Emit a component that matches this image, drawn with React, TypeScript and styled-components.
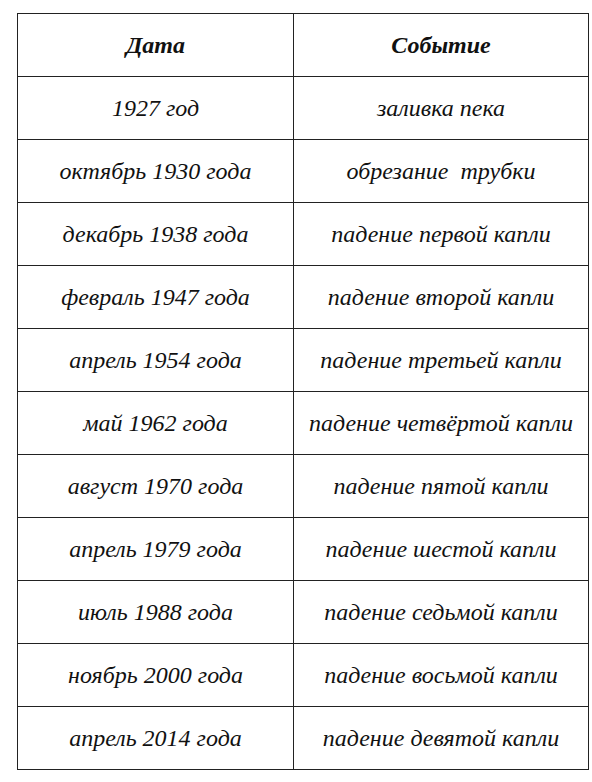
import styled, { createGlobalStyle } from 'styled-components'

const GlobalStyle = createGlobalStyle`
  html, body {
    margin: 0;
    padding: 0;
    background: #fff;
  }
`

const Page = styled.div`
  padding: 13px 0 0 17px;
`

const Table = styled.table`
  border-collapse: collapse;
  table-layout: fixed;
  width: 571px;
  font-family: 'Liberation Serif', 'Times New Roman', serif;
  font-style: italic;
  font-size: 24px;
  color: #111;
`

const Cell = styled.td<{ $head?: boolean }>`
  border: 1px solid #222;
  height: 62px;
  padding: 0;
  text-align: center;
  vertical-align: middle;
  white-space: pre;
  font-weight: ${(p) => (p.$head ? 700 : 400)};
`

const rows: [string, string][] = [
  ['1927 год', 'заливка пека'],
  ['октябрь 1930 года', 'обрезание  трубки'],
  ['декабрь 1938 года', 'падение первой капли'],
  ['февраль 1947 года', 'падение второй капли'],
  ['апрель 1954 года', 'падение третьей капли'],
  ['май 1962 года', 'падение четвёртой капли'],
  ['август 1970 года', 'падение пятой капли'],
  ['апрель 1979 года', 'падение шестой капли'],
  ['июль 1988 года', 'падение седьмой капли'],
  ['ноябрь 2000 года', 'падение восьмой капли'],
  ['апрель 2014 года', 'падение девятой капли'],
]

export default function App() {
  return (
    <Page>
      <GlobalStyle />
      <Table>
        <colgroup>
          <col style={{ width: 276 }} />
          <col style={{ width: 295 }} />
        </colgroup>
        <tbody>
          <tr>
            <Cell $head>Дата</Cell>
            <Cell $head>Событие</Cell>
          </tr>
          {rows.map(([date, event]) => (
            <tr key={date}>
              <Cell>{date}</Cell>
              <Cell>{event}</Cell>
            </tr>
          ))}
        </tbody>
      </Table>
    </Page>
  )
}
